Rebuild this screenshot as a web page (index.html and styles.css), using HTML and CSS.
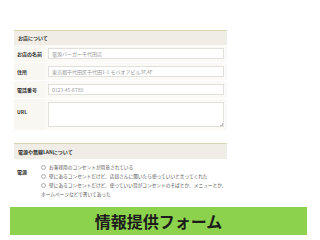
FILE: index.html
```html
<!DOCTYPE html>
<html lang="ja">
<head>
<meta charset="utf-8">
<link rel="stylesheet" href="styles.css">
</head>
<body>
<div class="page">
  <section class="panel">
    <div class="sec-head">お店について</div>
    <div class="row">
      <div class="label">お店の名前</div>
      <div class="value"><div class="input">電源バーガー千代田店</div></div>
    </div>
    <div class="row">
      <div class="label">住所</div>
      <div class="value"><div class="input">東京都千代田区千代田1-1 モバオアビル3F,4F</div></div>
    </div>
    <div class="row">
      <div class="label">電話番号</div>
      <div class="value"><div class="input">0123-45-6789</div></div>
    </div>
    <div class="row">
      <div class="label">URL</div>
      <div class="value"><div class="textarea"><span class="grip"></span></div></div>
    </div>
  </section>

  <section class="panel panel2">
    <div class="sec-head tall">電源や無線LANについて</div>
    <div class="row row2">
      <div class="label">電源</div>
      <div class="value opts">
        <p><span class="radio"></span>お客様用のコンセントが用意されている</p>
        <p><span class="radio"></span>壁にあるコンセントだけど、店員さんに聞いたら使っていいと言ってくれた</p>
        <p><span class="radio"></span>壁にあるコンセントだけど、使っていい旨がコンセントのそばとか、メニューとか、ホームページなどで書いてあった</p>
      </div>
    </div>
  </section>

  <div class="banner">情報提供フォーム</div>
</div>
</body>
</html>
```

FILE: styles.css
```css
* { box-sizing: border-box; }
html, body { margin: 0; padding: 0; background: #fff; }
body {
  font-family: "Noto Sans CJK JP", "Noto Sans", sans-serif;
  width: 320px;
  height: 240px;
  overflow: hidden;
}
.page {
  padding-top: 30px;
  display: flex;
  flex-direction: column;
}
.panel {
  margin-left: 14px;
  width: 213px;
  background: #f8f7f2;
}
.sec-head {
  height: 15px;
  border-top: 1px solid #d9d6b2;
  background: #efede5;
  color: #333;
  font-size: 5px;
  font-weight: bold;
  line-height: 14px;
  padding-left: 4px;
}
.sec-head.tall {
  height: 16px;
  line-height: 16px;
}
.row {
  display: grid;
  grid-template-columns: 31px 1fr;
  border-top: 1px solid #fff;
}
.row:nth-child(2) { border-top: none; }
.label {
  font-size: 5px;
  font-weight: bold;
  color: #333;
  padding-left: 3px;
  display: flex;
  align-items: center;
}
.row:last-child .label { align-items: flex-start; padding-top: 9px; }
.value {
  padding: 3px;
  background: #fbfaf7;
}
.input {
  height: 11px;
  background: #fff;
  border: 1px solid #e2e0da;
  font-size: 5px;
  color: #9a9a9a;
  line-height: 9px;
  padding-left: 3px;
  white-space: nowrap;
  overflow: hidden;
}
.textarea {
  position: relative;
  height: 25px;
  background: #fff;
  border: 1px solid #e2e0da;
}
.grip {
  position: absolute;
  right: 0;
  bottom: 0;
  width: 3px;
  height: 3px;
  border-right: 1px solid #bbb;
  border-bottom: 1px solid #bbb;
}
.panel2 {
  margin-top: 13px;
  background: #fff;
}
.row2 {
  grid-template-columns: 27px 190px;
  border-top: none;
}
.row2 .label {
  align-items: flex-start;
  padding-top: 5px;
}
.row2 .value { background: #fff; }
.opts { padding: 4px 0 2px 0; }
.opts p {
  margin: 0;
  font-size: 4.7px;
  line-height: 9px;
  color: #555;
}
.radio {
  display: inline-block;
  width: 5px;
  height: 5px;
  border: 0.6px solid #aaa;
  border-radius: 50%;
  margin-right: 3px;
  vertical-align: -0.5px;
  background: #fff;
}
.banner {
  margin-top: 6px;
  margin-left: 10px;
  width: 297px;
  height: 28px;
  background: #8dd24d;
  color: #1c1c1c;
  font-size: 16px;
  font-weight: bold;
  text-align: center;
  line-height: 28px;
}
```
